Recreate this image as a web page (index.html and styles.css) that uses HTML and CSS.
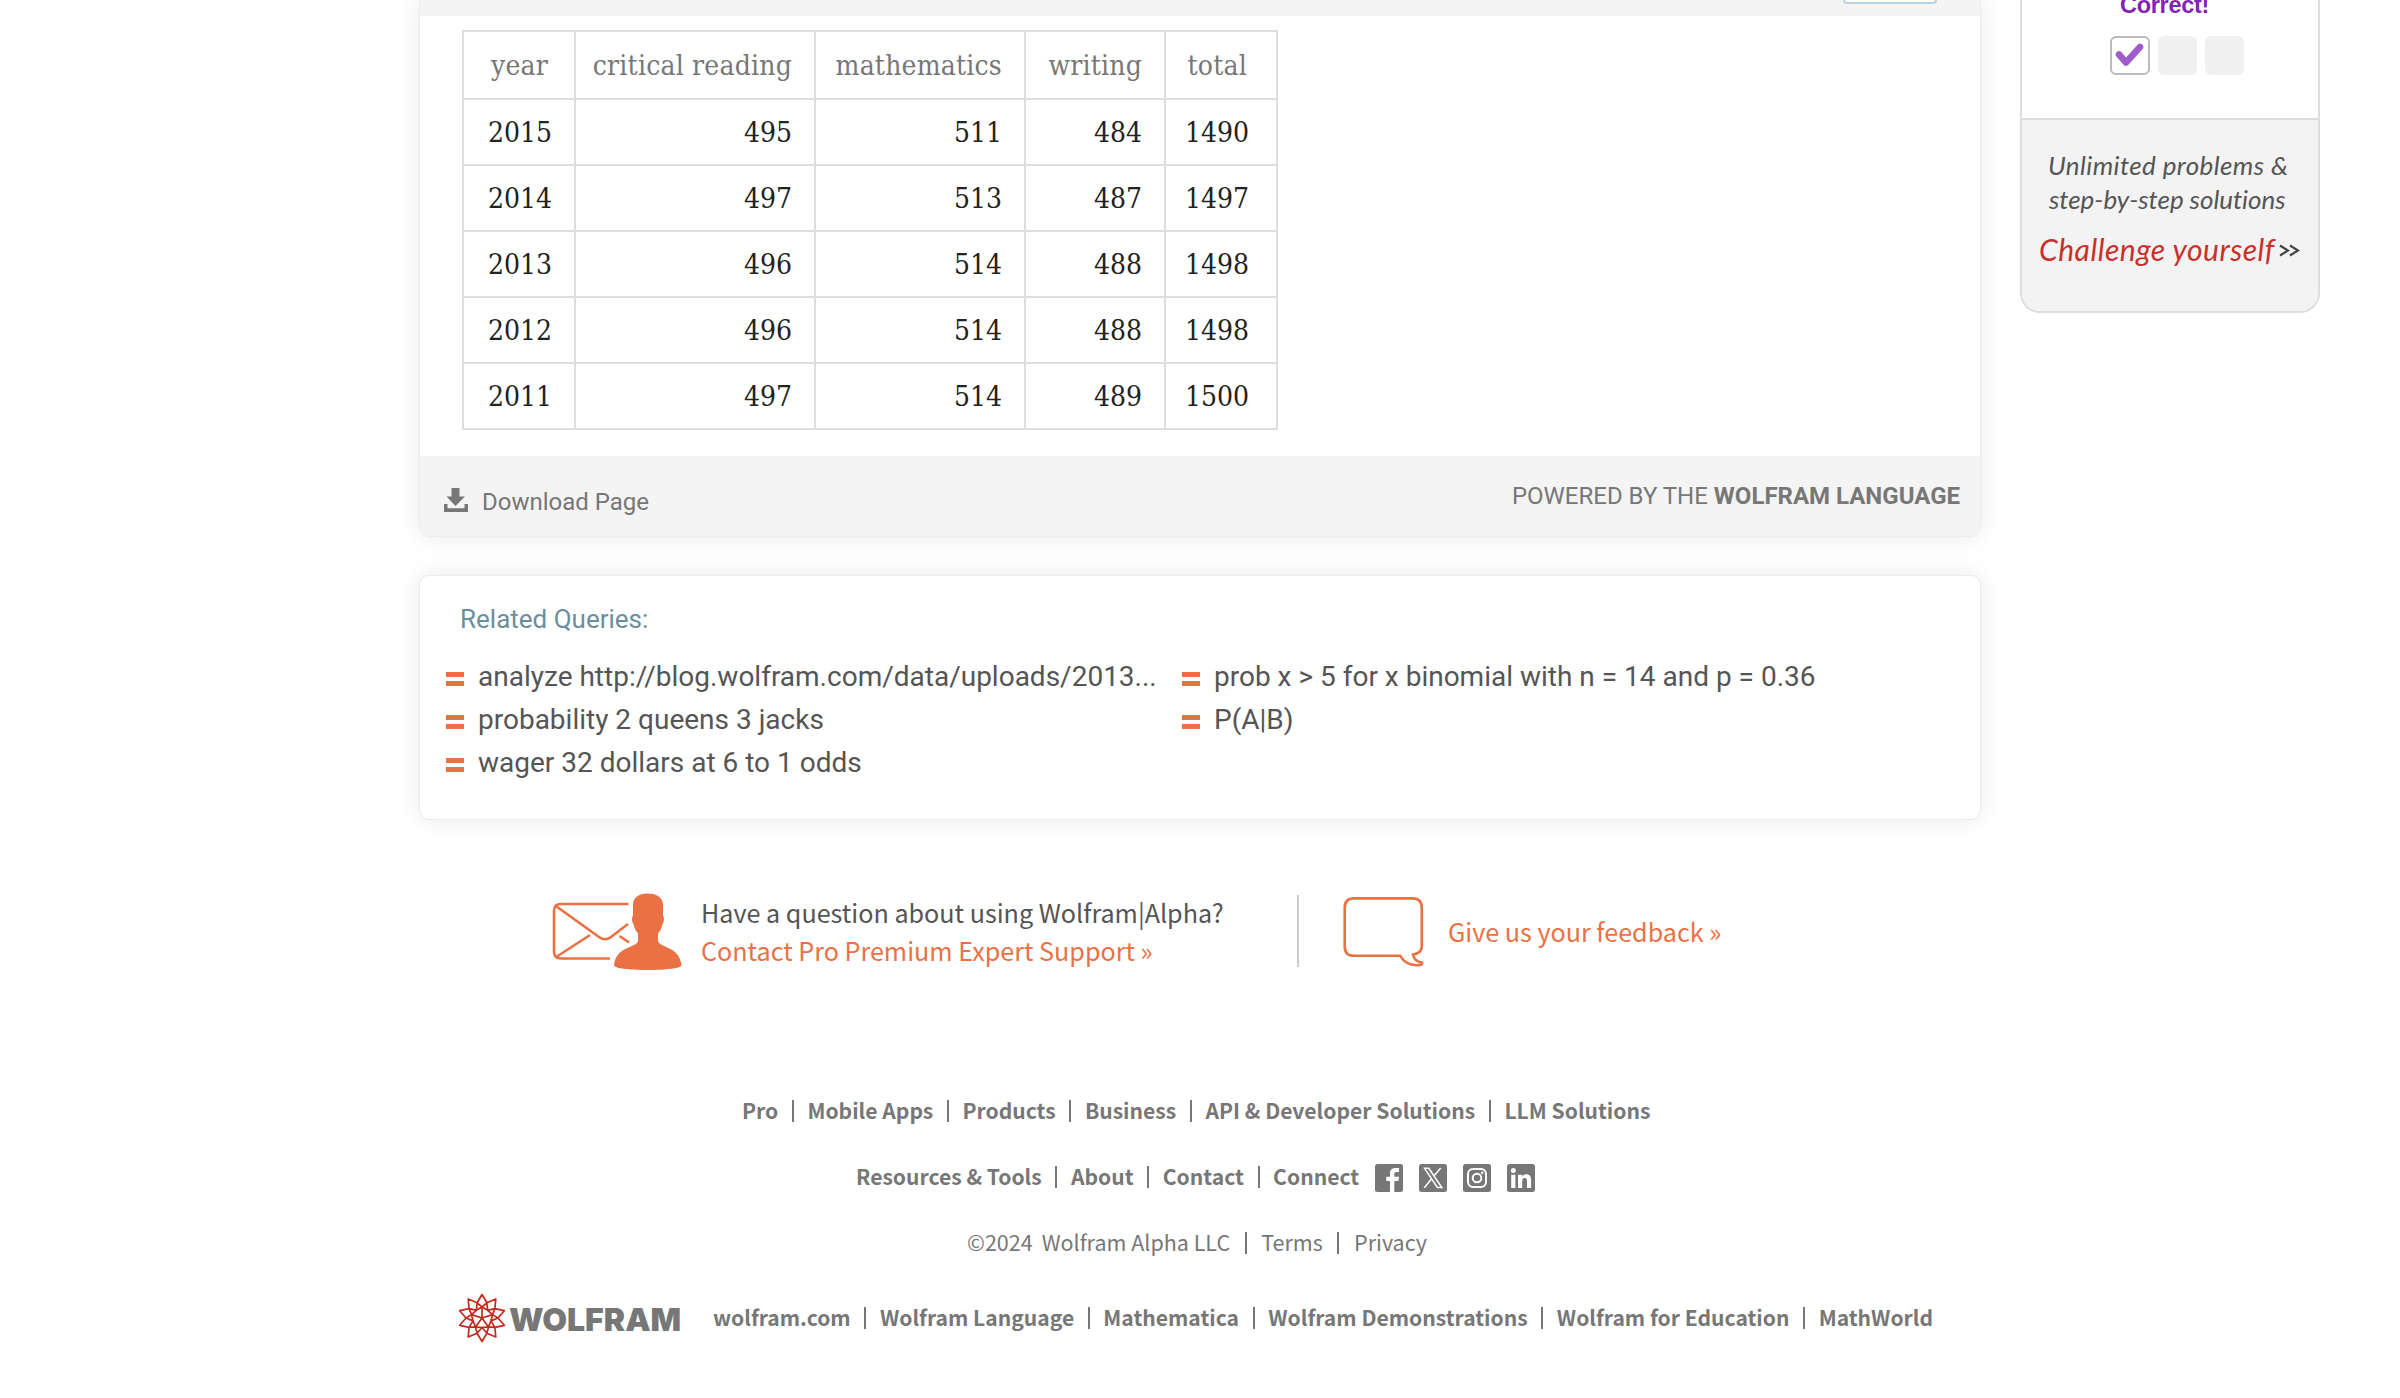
FILE: index.html
```
<!DOCTYPE html>
<html lang="en">
<head>
<meta charset="utf-8">
<title>Wolfram|Alpha</title>
<link rel="stylesheet" href="styles.css">
</head>
<body>
<div class="page">
  <div class="columns">
    <main class="main">
      <section class="card results">
        <div class="pod-head"><span class="pod-button"></span></div>
        <div class="pod-body">
          <table class="scores">
            <colgroup><col class="c-year"><col class="c-reading"><col class="c-math"><col class="c-writing"><col class="c-total"></colgroup>
            <thead><tr><th>year</th><th>critical reading</th><th>mathematics</th><th>writing</th><th>total</th></tr></thead>
            <tbody>
              <tr><td>2015</td><td>495</td><td>511</td><td>484</td><td>1490</td></tr>
              <tr><td>2014</td><td>497</td><td>513</td><td>487</td><td>1497</td></tr>
              <tr><td>2013</td><td>496</td><td>514</td><td>488</td><td>1498</td></tr>
              <tr><td>2012</td><td>496</td><td>514</td><td>488</td><td>1498</td></tr>
              <tr><td>2011</td><td>497</td><td>514</td><td>489</td><td>1500</td></tr>
            </tbody>
          </table>
        </div>
        <div class="results-foot">
          <a class="download">
            <svg width="24" height="24" viewBox="0 0 24 24"><path d="M7.5 0h8v8.5h5.5L11.5 18 2.500 8.500h5zM0 16h3.500v4.300h17V16H24v8H0z"/></svg>
            <span>Download Page</span>
          </a>
          <span class="powered">POWERED BY THE <b>WOLFRAM LANGUAGE</b></span>
        </div>
      </section>

      <section class="card related">
        <h2>Related Queries:</h2>
        <div class="queries">
          <ul>
            <li><i class="equals"></i>analyze http://blog.wolfram.com/data/uploads/2013...</li>
            <li><i class="equals"></i>probability 2 queens 3 jacks</li>
            <li><i class="equals"></i>wager 32 dollars at 6 to 1 odds</li>
          </ul>
          <ul>
            <li><i class="equals"></i>prob x &gt; 5 for x binomial with n = 14 and p = 0.36</li>
            <li><i class="equals"></i>P(A|B)</li>
          </ul>
        </div>
      </section>
    </main>

    <aside class="promo">
      <div class="promo-top">
        <span class="correct">Correct!</span>
        <div class="boxes">
          <span class="box checked"><svg width="36" height="34" viewBox="0 0 36 34"><path d="M7 16.500l7 8L28 9" /></svg></span>
          <span class="box"></span>
          <span class="box"></span>
        </div>
      </div>
      <div class="promo-bottom">
        <p>Unlimited problems &amp;</p>
        <p class="second">step-by-step solutions</p>
        <p class="challenge"><span>Challenge yourself</span><svg width="21" height="13" viewBox="0 0 21 13"><path d="M1 1.500l8 5-8 5M11 1.500l8 5-8 5"/></svg></p>
      </div>
    </aside>
  </div>

  <section class="support">
    <svg class="envelope" width="131" height="78" viewBox="7 7 131 78">
      <path class="line" d="M83.500 19H16q-7 0-7 7v40.500q0 7 7 7h49M11.500 21.500L54 52q6 4.500 12 0l17-13M12 71.500L45 50M74.500 51l9.500 6.500"/>
      <path class="solid" d="M102.500 8.500c9.500 0 15.500 4.500 15.500 11v11.500c1.600 1 1.300 6-.7 8.500-.8 4-2 6.500-4.300 9v8c4 7 21 5 23.500 23.500 0 3.500-15 5-34 5s-33.500-1.500-33.500-5C71.500 61.500 89 63.500 93 56.500v-8c-2.300-2.500-3.500-5-4.300-9-2-2.500-2.300-7.500-.7-8.500V19.500c0-6.500 5.500-11 14.500-11z"/>
    </svg>
    <div class="support-text">
      <span>Have a question about using Wolfram|Alpha?</span>
      <a>Contact Pro Premium Expert Support »</a>
    </div>
    <div class="rule"></div>
    <svg class="bubble" width="82" height="71" viewBox="83 27 82 71">
      <path class="line" d="M140 85.700H94q-9.300 0-9.300-9.300V37.700q0-9.300 9.300-9.300h58.500q9.300 0 9.300 9.300v38.500q0 6.800-8.800 8.300c1 5.500 5 7.500 9 8.200.8 2-2.500 2.500-5.500 2.500-8.500 0-13-3.500-16.500-9.500z"/>
    </svg>
    <a class="feedback">Give us your feedback »</a>
  </section>

  <footer class="footer">
    <nav class="row products"><a>Pro</a><a>Mobile Apps</a><a>Products</a><a>Business</a><a>API &amp; Developer Solutions</a><a>LLM Solutions</a></nav>
    <nav class="row company"><a>Resources &amp; Tools</a><a>About</a><a>Contact</a><a>Connect</a>
      <div class="social">
        <svg width="28" height="28" viewBox="0 0 28 28"><rect width="28" height="28" rx="2.500"/><path class="cut" d="M15 28V17h-3.700v-4.300H15V9.500C15 5.800 17.200 4 20.500 4H24v4h-2.200c-2 0-2.500.8-2.500 2.300v2.400H24l-.6 4.300h-4.100v11z"/></svg>
        <svg width="28" height="28" viewBox="0 0 28 28"><rect width="28" height="28" rx="2.500"/><path class="stroke" d="M5.500 4.300h4.300L22.800 23.500h-4.400zM21.700 4L15 11.900M12.600 14.700L5.300 23.700"/></svg>
        <svg width="28" height="28" viewBox="0 0 28 28"><rect width="28" height="28" rx="2.500"/><rect class="stroke thick" x="5" y="5" width="18" height="18" rx="5"/><circle class="stroke thick" cx="14" cy="14" r="4.300"/><circle class="cut" cx="19.200" cy="8.800" r="1.300"/></svg>
        <svg width="28" height="28" viewBox="0 0 28 28"><rect width="28" height="28" rx="2.500"/><circle class="cut" cx="6.300" cy="6.500" r="2.500"/><path class="cut" d="M4.200 10.700h4.200V24H4.200zM11 10.700h4v1.900c.9-1.500 2.400-2.300 4.200-2.300 3.800 0 4.900 2.500 4.900 6V24H20v-6.700c0-1.800-.3-3.300-2.200-3.300s-2.600 1.400-2.600 3.200V24H11z"/></svg>
      </div>
    </nav>
    <nav class="row legal"><span class="copy">©2024</span><a>Wolfram Alpha LLC</a><a>Terms</a><a>Privacy</a></nav>
    <div class="row sites">
      <div class="logo">
        <svg width="48" height="52" viewBox="-24 -26 48 52"><path d="M0-23.500L4.900-15.200 13.800-19 12.900-9.400 22.300-7.300 16 0l6.300 7.300L12.900 9.400l.9 9.600-8.900-3.800L0 23.500l-4.900-8.300-8.900 3.800.9-9.600-9.400-2.100L-16 0l-6.300-7.300 9.400-2.100-.9-9.600 8.900 3.800zM4.900-15.200L0-11l-4.900-4.200M4.900-15.200l.7 7.500 7.300-1.700-2.400 6L16 0 9 2.900l3.900 6.500-6.400-.5-1.600 6.300L0 9.500l-4.900 5.700-1.600-6.300-6.400.5L-9 2.900-16 0l5.500-3.400-2.400-6 7.300 1.700.7-7.500M0-11V0M0-11l5.600 3.300M0-11l-5.600 3.300M10.500-3.400L0 0l6.500 8.900M-10.500-3.400L0 0l-6.500 8.900M5.600-7.700l4.900 4.300L9 2.900l-2.500 6L0 9.500l-6.500-.6L-9 2.900l-1.500-6.300 4.900-4.300"/></svg>
        <span>WOLFRAM</span>
      </div>
      <nav><a>wolfram.com</a><a>Wolfram Language</a><a>Mathematica</a><a>Wolfram Demonstrations</a><a>Wolfram for Education</a><a>MathWorld</a></nav>
    </div>
  </footer>
</div>
</body>
</html>
```
FILE: styles.css
```
* { box-sizing: border-box; }
body { margin: 0; background: #fff; color: #555; font-family: Roboto, sans-serif; }
h2, p, ul { margin: 0; padding: 0; }
ul { list-style: none; }
svg { display: block; flex: none; }
.page { height: 1398px; overflow: hidden; }

.columns { display: flex; align-items: flex-start; padding-left: 419px; gap: 39px; }
.main { width: 1562px; }
.card { background: #fff; border: 1px solid #ececec; border-radius: 10px; box-shadow: 0 0 24px rgba(0, 0, 0, .09); }

.results { border-top: 0; border-radius: 0 0 10px 10px; height: 537px; overflow: hidden; }
.pod-head { height: 16px; background: #f4f4f4; display: flex; justify-content: flex-end; padding-right: 43px; }
.pod-button { width: 94px; height: 4px; background: #fff; border: 2px solid #bbd3df; border-top: 0; border-radius: 0 0 8px 8px; }
.pod-body { height: 440px; padding: 14px 0 0 42px; }

.scores { width: 816px; table-layout: fixed; border-collapse: separate; border-spacing: 0; border: solid #dedede; border-width: 2px 0 0 2px; font: 28px/36px "DejaVu Serif Condensed", "DejaVu Serif", serif; color: #222; }
.c-year { width: 112px; }
.c-reading { width: 240px; }
.c-math { width: 210px; }
.c-writing { width: 140px; }
.c-total { width: 112px; }
.scores th, .scores td { height: 66px; padding: 2px 22px 0 0; border: solid #dedede; border-width: 0 2px 2px 0; font-weight: 400; text-align: right; vertical-align: middle; white-space: nowrap; }
.scores th { height: 68px; color: #777; letter-spacing: .2px; }
.scores th:last-child { padding-right: 29px; }
.scores td:last-child { padding-right: 27px; }
.scores th:first-child { padding-right: 26px; }

.results-foot { height: 80px; background: #f4f4f4; display: flex; justify-content: space-between; align-items: flex-start; padding: 0 20px 0 24px; color: #777; font-size: 24px; line-height: 80px; }
.download { display: flex; gap: 14px; padding-top: 6px; }
.download svg { margin-top: 26px; fill: #777; }

.related { margin-top: 38px; height: 245px; padding: 28px 0 0 26px; }
.related h2 { margin-left: 14px; font-size: 26px; line-height: 30px; font-weight: 400; color: #6b8e9d; }
.queries { display: grid; grid-template-columns: 736px 1fr; margin-top: 21px; font-size: 28px; line-height: 43px; }
.queries li { display: flex; align-items: center; gap: 14px; white-space: nowrap; }
.equals { width: 18px; height: 14px; margin-top: 4px; border: solid #ea7144; border-width: 5px 0; }

.promo { width: 300px; height: 313px; border: 2px solid #ddd; border-top: 0; border-radius: 0 0 20px 20px; overflow: hidden; }
.promo-top { display: flow-root; height: 120px; border-bottom: 2px solid #ddd; }
.correct { display: block; margin: -9px 0 0 98px; height: 28px; font: bold 23.500px/28px "Liberation Sans", sans-serif; letter-spacing: -.3px; color: #8224b4; }
.boxes { display: flex; gap: 8px; margin: 17px 0 0 88px; }
.box { width: 39px; height: 39px; border-radius: 6px; background: #f0f0f0; }
.checked { width: 40px; background: #fff; border: 2px solid #bbb; }
.checked path { fill: none; stroke: #a05ccc; stroke-width: 6.500; stroke-linejoin: round; stroke-linecap: round; }
.promo-bottom { height: 191px; background: #f3f3f3; padding: 28px 0 0 26px; color: #555; font: italic 26px/38px Lato, sans-serif; white-space: nowrap; }
.promo-bottom p { line-height: 34px; letter-spacing: .4px; }
.promo-bottom .second { padding-left: 1px; letter-spacing: -.05px; }
.promo-bottom .challenge { display: flex; align-items: center; gap: 4px; margin: 16px 0 0 -9px; font-size: 30px; letter-spacing: .5px; color: #c8302b; }
.challenge svg { margin-top: 3px; }
.challenge path { fill: none; stroke: #444; stroke-width: 2.200; }

.support { display: flex; align-items: center; height: 78px; margin-top: 72px; padding-left: 552px; font-family: "Noto Sans CJK SC", sans-serif; font-size: 25.150px; line-height: 38px; white-space: nowrap; }
.support a { color: #ea7144; }
.support-text { display: flex; flex-direction: column; width: 614px; padding-left: 18px; }
.support .line { fill: none; stroke: #ea7144; stroke-width: 2.600; }
.support .solid { fill: #ea7144; }
.rule { width: 2px; height: 72px; background: #ccc; }
.bubble { margin: 3px 23px 0 44px; }

.footer { margin-top: 107px; font-family: "Noto Sans CJK SC", sans-serif; font-size: 21.100px; font-weight: 700; color: #777; white-space: nowrap; }
.row { display: flex; align-items: center; height: 66px; line-height: 30px; }
.row a + a::before { content: ""; display: inline-block; width: 2px; height: 22px; margin: 0 13.600px; background: #777; vertical-align: -3px; }
.products { padding-left: 742px; }
.company { padding-left: 856px; }
.social { display: flex; gap: 16px; margin: 3px 0 0 16px; fill: #777; }
.social .cut { fill: #fff; }
.social .stroke { fill: none; stroke: #fff; stroke-width: 1.500; }
.social .thick { stroke-width: 2; }
.legal { padding-left: 967px; font-size: 21.500px; font-weight: 400; }
.legal a + a::before { margin: 0 14.600px; }
.copy { margin-right: 9px; }
.sites { height: 84px; padding-left: 458px; }
.logo { display: flex; align-items: center; width: 255px; gap: 3px; }
.logo path { fill: none; stroke: #c42a1c; stroke-width: 1.700; stroke-linejoin: round; }
.logo svg { margin-top: 1px; }
.logo span { margin-top: 5px; font: 900 32px/38px Inter, sans-serif; }
```
